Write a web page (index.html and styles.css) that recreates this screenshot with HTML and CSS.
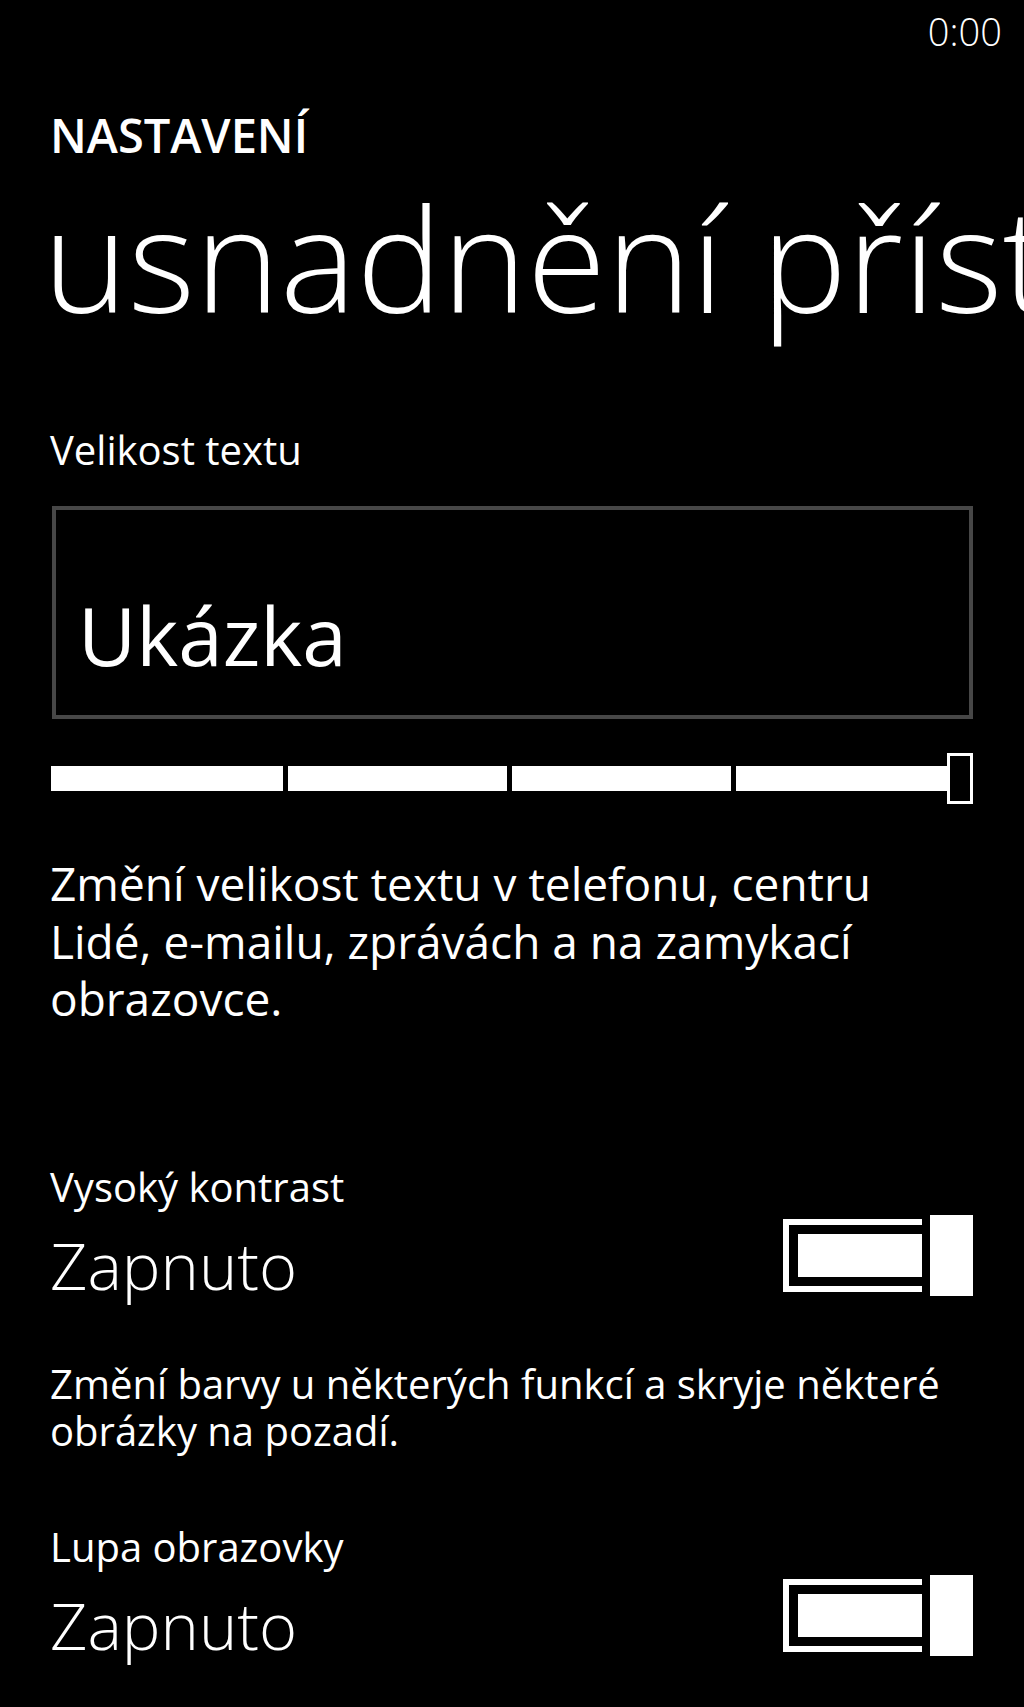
FILE: index.html
```html
<!DOCTYPE html>
<html lang="cs">
<head>
<meta charset="utf-8">
<title>usnadnění přístupu</title>
<link rel="stylesheet" href="styles.css">
</head>
<body>
<div class="screen">
  <div class="status-bar"><span class="time">0:00</span></div>
  <div class="page">
    <div class="app-title">NASTAVENÍ</div>
    <h1 class="page-title">usnadnění přístupu</h1>

    <div class="label label-size">Velikost textu</div>
    <div class="preview-box"><span class="preview-text">Ukázka</span></div>
    <div class="slider">
      <div class="seg"></div>
      <div class="seg"></div>
      <div class="seg"></div>
      <div class="seg"></div>
      <div class="slider-thumb"></div>
    </div>
    <p class="desc-large">Změní velikost textu v telefonu, centru<br>Lidé, e-mailu, zprávách a na zamykací<br>obrazovce.</p>

    <div class="label label-contrast">Vysoký kontrast</div>
    <div class="toggle-row">
      <span class="toggle-state">Zapnuto</span>
      <div class="switch">
        <div class="switch-track"><div class="switch-fill"></div></div>
        <div class="switch-thumb"></div>
      </div>
    </div>
    <p class="desc-small">Změní barvy u některých funkcí a skryje některé<br>obrázky na pozadí.</p>

    <div class="label label-zoom">Lupa obrazovky</div>
    <div class="toggle-row">
      <span class="toggle-state">Zapnuto</span>
      <div class="switch">
        <div class="switch-track"><div class="switch-fill"></div></div>
        <div class="switch-thumb"></div>
      </div>
    </div>
  </div>
</div>
</body>
</html>
```
FILE: styles.css
```css
html, body {
  margin: 0;
  padding: 0;
  background: #000;
}
body {
  color: #fff;
  font-family: "Open Sans", "Noto Sans", "DejaVu Sans", sans-serif;
  width: 1024px;
  height: 1707px;
  overflow: hidden;
}
.screen {
  width: 1024px;
  height: 1707px;
  overflow: hidden;
}
.status-bar {
  display: flex;
  justify-content: flex-end;
  padding: 12px 22px 0 0;
  height: 38px;
}
.time {
  font-size: 38px;
  line-height: 38px;
  font-weight: 300;
}
.page {
  padding: 0 51px 0 50px;
}
.app-title {
  margin-top: 62px;
  font-size: 47px;
  line-height: 46px;
  font-weight: 600;
}
.page-title {
  margin: 27px 0 0 -7px;
  font-size: 144px;
  line-height: 144px;
  font-weight: 300;
  white-space: nowrap;
}
.label {
  font-size: 40px;
  line-height: 48px;
  font-weight: 400;
}
.label-size { margin-top: 96.5px; }
.label-contrast { margin-top: 135.5px; }
.label-zoom { margin-top: 69.5px; }

.preview-box {
  margin: 32.5px 0 0 2px;
  height: 213px;
  border: 4px solid #474747;
  box-sizing: border-box;
  padding: 85px 0 0 22px;
}
.preview-text {
  display: block;
  font-size: 80px;
  line-height: 80px;
  font-weight: 400;
}
.slider {
  margin: 34px 0 0 1px;
  height: 51px;
  display: grid;
  grid-template-columns: 232px 219px 219px 1fr 26px;
  column-gap: 5px;
  align-items: center;
}
.seg {
  height: 25px;
  background: #fff;
}
.seg:nth-child(4) { margin-right: -5px; }
.slider-thumb {
  height: 51px;
  border: 3px solid #fff;
  box-sizing: border-box;
  background: #000;
}
.desc-large {
  margin: 51.4px 0 0;
  font-size: 46px;
  line-height: 57.5px;
}
.desc-small {
  margin: 62px 0 0;
  font-size: 40px;
  line-height: 47px;
}
.toggle-row {
  margin-top: 3.5px;
  display: flex;
  justify-content: space-between;
  align-items: flex-start;
}
.toggle-state {
  margin-top: 18px;
  font-size: 65px;
  line-height: 65px;
  font-weight: 300;
}
.switch {
  display: flex;
  align-items: center;
  gap: 8px;
  height: 81px;
}
.switch-track {
  width: 139px;
  height: 73px;
  box-sizing: border-box;
  border: 6px solid #fff;
  border-right: none;
  padding: 9px 0 9px 9px;
  display: flex;
}
.switch-fill {
  flex: 1;
  background: #fff;
}
.switch-thumb {
  width: 43px;
  height: 81px;
  background: #fff;
}
```
